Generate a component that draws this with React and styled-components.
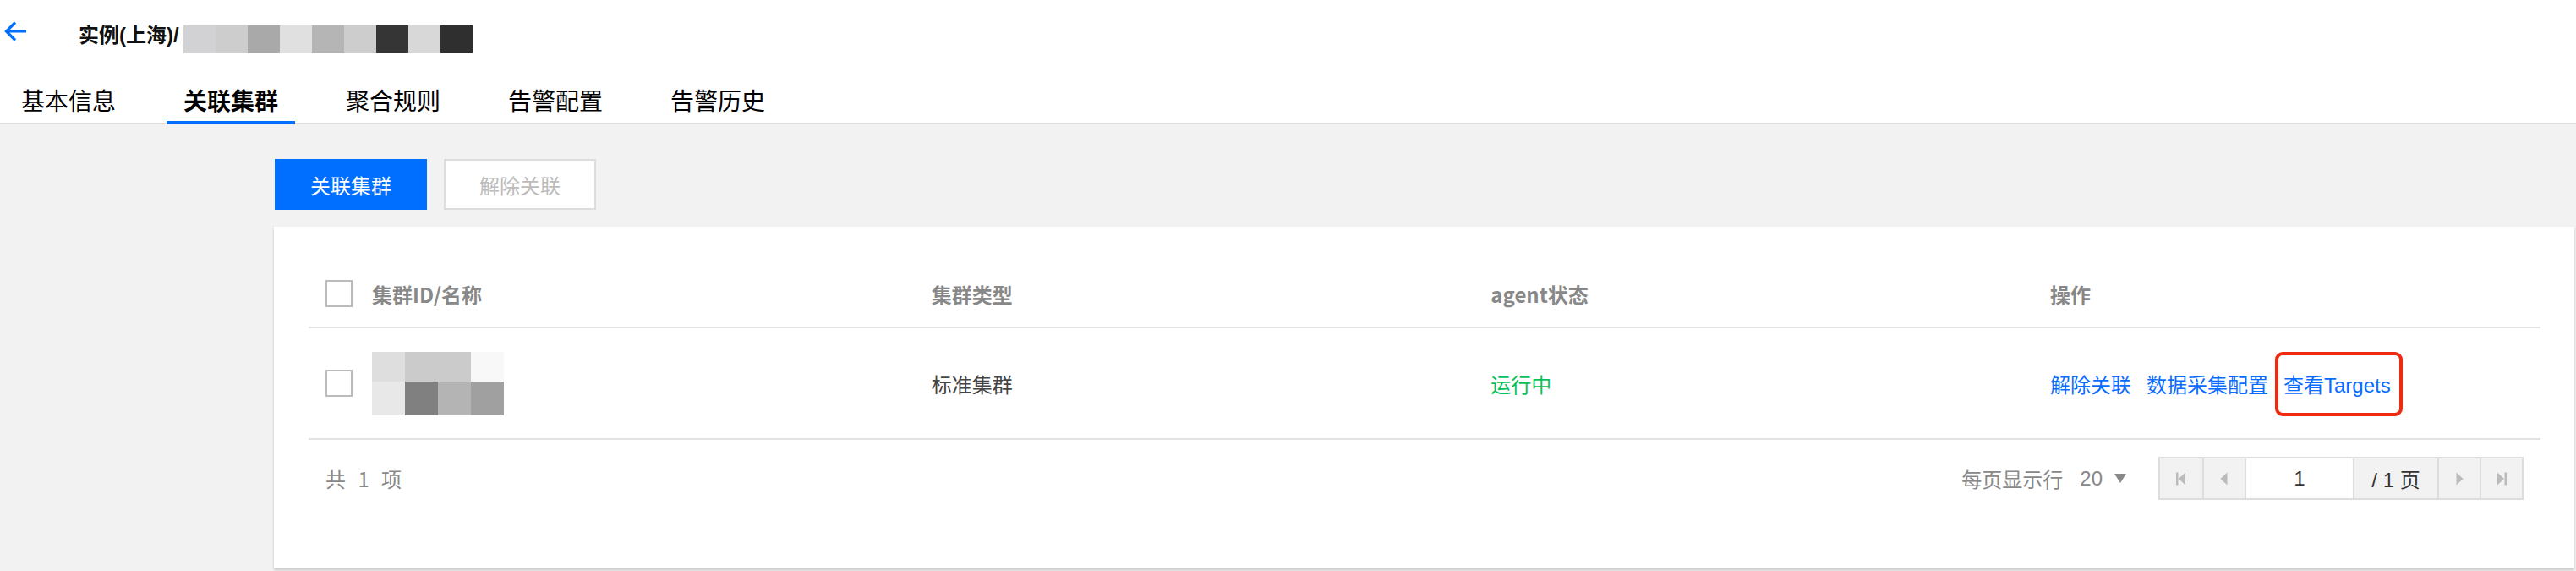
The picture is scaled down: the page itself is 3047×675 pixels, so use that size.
import React from "react";
import styled, { createGlobalStyle } from "styled-components";

const Global = createGlobalStyle`
  html, body { margin: 0; padding: 0; background: #f2f2f2; overflow: hidden; }
  body { font-family: "Liberation Sans", "Noto Sans CJK SC", sans-serif; color: #000; }
  * { box-sizing: border-box; }
`;

const Page = styled.div`
  width: 3047px;
  height: 675px;
  background: #f2f2f2;
  display: flex;
  flex-direction: column;
`;

const Header = styled.header`
  background: #fff;
  padding-top: 22px;
  border-bottom: 2px solid #ddd;
`;

const TitleRow = styled.div`
  display: flex;
  align-items: center;
  height: 40px;
  padding-left: 5px;
`;

const Back = styled.span`
  display: inline-flex;
  width: 28px;
  height: 28px;
  margin-top: -10px;
  margin-right: 60px;
`;

const Title = styled.h1`
  margin: 0;
  font-size: 24px;
  font-weight: 700;
  line-height: 40px;
  color: #111;
  display: flex;
  align-items: center;
`;

const Mosaic = styled.span`
  display: inline-flex;
  margin-left: 5px;
  margin-top: 8px;
`;

const Block = styled.span`
  display: block;
  width: ${(p) => p.$w || 38}px;
  height: ${(p) => p.$h || 33}px;
  background: ${(p) => p.$c};
`;

const Tabs = styled.nav`
  display: flex;
  gap: 40px;
  margin-top: 29px;
  padding-left: 5px;
`;

const Tab = styled.div`
  position: relative;
  padding: 0 20px;
  height: 54px;
  line-height: 54px;
  font-size: 28px;
  font-family: "Noto Sans CJK SC", sans-serif;
  font-weight: ${(p) => (p.$active ? 700 : 400)};
  color: #000;
  ${(p) =>
    p.$active &&
    `
    &::after {
      content: "";
      position: absolute;
      left: 0;
      right: 0;
      bottom: -2px;
      height: 4px;
      background: #006eff;
    }
  `}
`;

const Body = styled.main`
  flex: 1;
  padding: 41px 2px 0 324px;
`;

const Toolbar = styled.div`
  display: flex;
  gap: 20px;
  padding-left: 1px;
  margin-bottom: 20px;
`;

const Button = styled.button`
  width: 180px;
  height: 60px;
  font-family: "Noto Sans CJK SC", sans-serif;
  font-size: 24px;
  border: 2px solid ${(p) => (p.$primary ? "#006eff" : "#ddd")};
  background: ${(p) => (p.$primary ? "#006eff" : "#fff")};
  color: ${(p) => (p.$primary ? "#fff" : "#bbb")};
  padding: 0;
  cursor: pointer;
`;

const Card = styled.section`
  background: #fff;
  box-shadow: 0 2px 3px rgba(0, 0, 0, 0.18);
  padding: 40px 40px 81px 41px;
`;

const Row = styled.div`
  display: grid;
  grid-template-columns: 55px repeat(3, 1fr) 600px;
  align-items: center;
  height: ${(p) => (p.$head ? 80 : 132)}px;
  border-bottom: 2px solid #e2e2e2;
`;

const Cell = styled.div`
  padding-left: 20px;
  font-family: "Noto Sans CJK SC", sans-serif;
  font-size: 24px;
  font-weight: ${(p) => (p.$head ? 700 : 400)};
  color: ${(p) => p.$color || (p.$head ? "#888" : "#444")};
  display: flex;
  align-items: center;
  white-space: nowrap;
`;

const Checkbox = styled.span`
  display: block;
  width: 32px;
  height: 32px;
  border: 2px solid #bbb;
  background: #fff;
`;

const NameMosaic = styled.div`
  display: grid;
  grid-template-columns: repeat(4, 39px);
  grid-template-rows: 35px 40px;
`;

const Link = styled.a`
  color: #0a6cff;
  text-decoration: none;
  margin-right: 18px;
  font-family: "Liberation Sans", "Noto Sans CJK SC", sans-serif;
  position: relative;
  ${(p) =>
    p.$marked &&
    `
    &::after {
      content: "";
      position: absolute;
      left: -10px;
      right: -14px;
      top: -20px;
      bottom: -21px;
      border: 4px solid #ee2a10;
      border-radius: 9px;
    }
  `}
`;

const Footer = styled.div`
  display: flex;
  justify-content: space-between;
  align-items: center;
  padding: 20px 20px 0 20px;
`;

const Total = styled.span`
  font-family: "Noto Sans CJK SC", sans-serif;
  font-size: 24px;
  color: #888;
  word-spacing: 9px;
`;

const PagerArea = styled.div`
  display: flex;
  align-items: center;
`;

const PageSize = styled.span`
  display: flex;
  align-items: center;
  font-family: "Noto Sans CJK SC", sans-serif;
  font-size: 24px;
  color: #888;
  margin-right: 38px;
`;

const SizeValue = styled.span`
  font-family: "Liberation Sans", sans-serif;
  margin-left: 20px;
  margin-right: 14px;
`;

const Caret = styled.span`
  width: 0;
  height: 0;
  border-left: 7px solid transparent;
  border-right: 7px solid transparent;
  border-top: 11px solid #888;
`;

const Pager = styled.div`
  display: flex;
  height: 51px;
  border: 2px solid #ddd;
  background: #f2f2f2;
`;

const PagerBtn = styled.span`
  width: ${(p) => p.$w}px;
  display: flex;
  align-items: center;
  justify-content: center;
  border-left: ${(p) => (p.$first ? "none" : "2px solid #ddd")};
  background: ${(p) => (p.$white ? "#fff" : "#f2f2f2")};
  font-family: "Liberation Sans", "Noto Sans CJK SC", sans-serif;
  font-size: 24px;
  color: #333;
`;

const Icon = ({ kind }) => {
  const c = "#bbb";
  return (
    <svg width="16" height="16" viewBox="0 0 16 16">
      {kind === "first" && (
        <>
          <rect x="2" y="0.5" width="2.5" height="15" fill={c} />
          <polygon points="13,0.5 13,15.5 5,8" fill={c} />
        </>
      )}
      {kind === "prev" && <polygon points="11.5,0.5 11.5,15.5 3.5,8" fill={c} />}
      {kind === "next" && <polygon points="4.5,0.5 4.5,15.5 12.5,8" fill={c} />}
      {kind === "last" && (
        <>
          <polygon points="3,0.5 3,15.5 11,8" fill={c} />
          <rect x="11.5" y="0.5" width="2.5" height="15" fill={c} />
        </>
      )}
    </svg>
  );
};

const titleBlocks = ["#d2d2d4", "#cdcdcd", "#a9a9a9", "#e0e0e0", "#b5b5b5", "#cdcdcd", "#353535", "#d8d8d8", "#2f2f2f"];
const nameBlocks = ["#dedede", "#cbcbcb", "#cbcbcb", "#f8f8f8", "#e8e8e8", "#808080", "#b4b4b4", "#a0a0a0"];

export default function App() {
  return (
    <Page>
      <Global />
      <Header>
        <TitleRow>
          <Back>
            <svg width="28" height="28" viewBox="0 0 28 28" fill="none">
              <path d="M26 14H3M13 3.5L2.5 14L13 24.5" stroke="#006eff" strokeWidth="3.2" />
            </svg>
          </Back>
          <Title>
            实例(上海)/
            <Mosaic>
              {titleBlocks.map((c, i) => (
                <Block key={i} $c={c} />
              ))}
            </Mosaic>
          </Title>
        </TitleRow>
        <Tabs>
          <Tab>基本信息</Tab>
          <Tab $active>关联集群</Tab>
          <Tab>聚合规则</Tab>
          <Tab>告警配置</Tab>
          <Tab>告警历史</Tab>
        </Tabs>
      </Header>
      <Body>
        <Toolbar>
          <Button $primary>关联集群</Button>
          <Button>解除关联</Button>
        </Toolbar>
        <Card>
          <Row $head>
            <Cell>
              <Checkbox />
            </Cell>
            <Cell $head>集群ID/名称</Cell>
            <Cell $head>集群类型</Cell>
            <Cell $head>agent状态</Cell>
            <Cell $head>操作</Cell>
          </Row>
          <Row>
            <Cell>
              <Checkbox />
            </Cell>
            <Cell>
              <NameMosaic>
                {nameBlocks.map((c, i) => (
                  <Block key={i} $c={c} $w={39} $h={i < 4 ? 35 : 40} />
                ))}
              </NameMosaic>
            </Cell>
            <Cell>标准集群</Cell>
            <Cell $color="#0abf5b">运行中</Cell>
            <Cell>
              <Link>解除关联</Link>
              <Link>数据采集配置</Link>
              <Link $marked>查看Targets</Link>
            </Cell>
          </Row>
          <Footer>
            <Total>共 1 项</Total>
            <PagerArea>
              <PageSize>
                每页显示行
                <SizeValue>20</SizeValue>
                <Caret />
              </PageSize>
              <Pager>
                <PagerBtn $w={50} $first>
                  <Icon kind="first" />
                </PagerBtn>
                <PagerBtn $w={50}>
                  <Icon kind="prev" />
                </PagerBtn>
                <PagerBtn $w={128} $white>1</PagerBtn>
                <PagerBtn $w={100}>/ 1 页</PagerBtn>
                <PagerBtn $w={50}>
                  <Icon kind="next" />
                </PagerBtn>
                <PagerBtn $w={50}>
                  <Icon kind="last" />
                </PagerBtn>
              </Pager>
            </PagerArea>
          </Footer>
        </Card>
      </Body>
    </Page>
  );
}
